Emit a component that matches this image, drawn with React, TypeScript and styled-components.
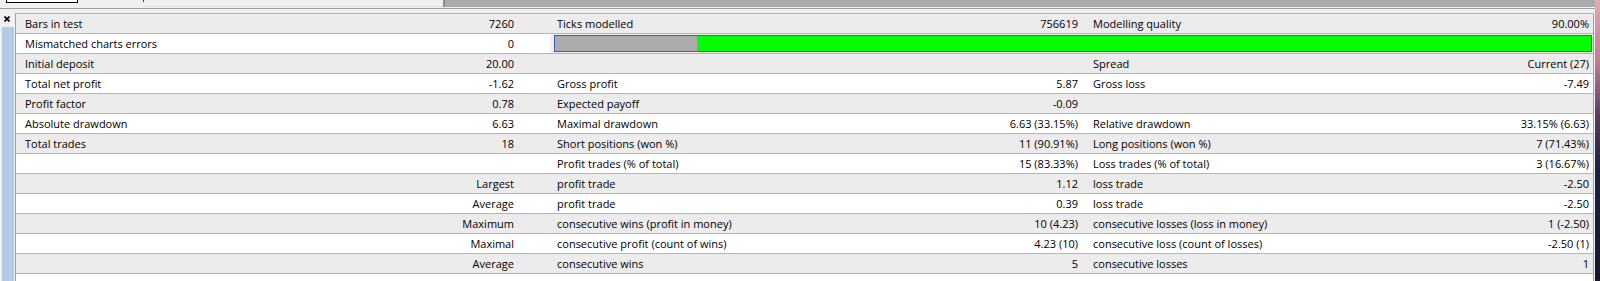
import React from 'react';
import styled, { createGlobalStyle } from 'styled-components';

const GlobalStyle = createGlobalStyle`
  html, body { margin: 0; padding: 0; background: #f0f0f0; }
  body {
    font-family: "Open Sans", "Noto Sans", sans-serif;
    font-size: 11px;
    color: #000;
  }
`;

const Screen = styled.div`
  display: flex;
  width: 1600px;
  height: 281px;
  overflow: hidden;
`;

const Window = styled.div`
  width: 1595px;
  display: flex;
  flex-direction: column;
  background: #f0f0f0;
`;

const Desktop = styled.div`
  flex: 1;
  background: linear-gradient(180deg, #e0aab8 0%, #c27a92 22%, #5a3a60 42%, #1c2040 60%, #141a30 100%);
`;

const TopStrip = styled.div`
  height: 7px;
  display: flex;
  align-items: flex-start;
  flex-shrink: 0;
`;

const TabStub = styled.div`
  margin-left: 6px;
  width: 70px;
  height: 2px;
  background: #ffffff;
  border: 1px solid #000;
  border-top: none;
`;

const TinyMark = styled.div`
  margin-left: 65px;
  width: 1px;
  height: 2px;
  background: #444;
`;

const TitleArea = styled.div`
  width: 299px;
  height: 6px;
  border-bottom: 1px solid #e2e2e2;
`;

const GrayBar = styled.div`
  flex: 1;
  height: 7px;
  background: #ababab;
  border-left: 2px solid #8e8e8e;
`;

const Separator = styled.div`
  margin-top: 1px;
  height: 4px;
  border-top: 1px solid #a0a0a0;
  flex-shrink: 0;
`;

const Body = styled.div`
  flex: 1;
  display: flex;
  min-height: 0;
`;

const SideBar = styled.div`
  width: 15px;
  display: flex;
  flex-direction: column;
`;

const CloseBox = styled.div`
  height: 14px;
  padding: 3px 0 0 4px;
  box-sizing: border-box;
  display: flex;
  align-items: flex-start;
`;

const BlueStrip = styled.div`
  margin-left: 2px;
  width: 12px;
  flex: 1;
  background: #b3cbe5;
`;

const Table = styled.div`
  flex: 1;
  margin-right: 1px;
  display: flex;
  flex-direction: column;
  border-left: 1px solid #a0a0a0;
  border-right: 1px solid #a0a0a0;
  border-top: 1px solid #b5b5b5;
  background: #ffffff;
`;

const Row = styled.div<{ $alt: boolean }>`
  display: grid;
  grid-template-columns: 270px 264px 280px 256px 254px 253px;
  height: 19px;
  flex-shrink: 0;
  border-bottom: 1px solid #b5b5b5;
  background: ${(p) => (p.$alt ? '#ececec' : '#ffffff')};
`;

const Cell = styled.div<{ $align: 'left' | 'right'; $pad: number }>`
  line-height: 19px;
  white-space: nowrap;
  overflow: hidden;
  text-align: ${(p) => p.$align};
  ${(p) => (p.$align === 'left' ? `padding-left: ${p.$pad}px;` : `padding-right: ${p.$pad}px;`)}
`;

const BarCell = styled.div`
  grid-column: 3 / 7;
  padding: 1px 1px 1px 4px;
  background: #f0f0f0;
`;

const QualityBar = styled.div`
  height: 17px;
  box-sizing: border-box;
  border: 1px solid #2f62c6;
  display: flex;
`;

const BarGray = styled.div`
  width: 142px;
  background: #acacac;
`;

const BarGreen = styled.div`
  flex: 1;
  background: #00ff00;
`;

const cols: { align: 'left' | 'right'; pad: number }[] = [
  { align: 'left', pad: 9 },
  { align: 'right', pad: 36 },
  { align: 'left', pad: 7 },
  { align: 'right', pad: 8 },
  { align: 'left', pad: 7 },
  { align: 'right', pad: 4 },
];

const rows: (string[] | 'bar')[] = [
  ['Bars in test', '7260', 'Ticks modelled', '756619', 'Modelling quality', '90.00%'],
  'bar',
  ['Initial deposit', '20.00', '', '', 'Spread', 'Current (27)'],
  ['Total net profit', '-1.62', 'Gross profit', '5.87', 'Gross loss', '-7.49'],
  ['Profit factor', '0.78', 'Expected payoff', '-0.09', '', ''],
  ['Absolute drawdown', '6.63', 'Maximal drawdown', '6.63 (33.15%)', 'Relative drawdown', '33.15% (6.63)'],
  ['Total trades', '18', 'Short positions (won %)', '11 (90.91%)', 'Long positions (won %)', '7 (71.43%)'],
  ['', '', 'Profit trades (% of total)', '15 (83.33%)', 'Loss trades (% of total)', '3 (16.67%)'],
  ['', 'Largest', 'profit trade', '1.12', 'loss trade', '-2.50'],
  ['', 'Average', 'profit trade', '0.39', 'loss trade', '-2.50'],
  ['', 'Maximum', 'consecutive wins (profit in money)', '10 (4.23)', 'consecutive losses (loss in money)', '1 (-2.50)'],
  ['', 'Maximal', 'consecutive profit (count of wins)', '4.23 (10)', 'consecutive loss (count of losses)', '-2.50 (1)'],
  ['', 'Average', 'consecutive wins', '5', 'consecutive losses', '1'],
  ['', '', '', '', '', ''],
];

const CloseIcon = () => (
  <svg width="6" height="6" viewBox="0 0 6 6">
    <path d="M0.5 0.5 L5.5 5.5 M5.5 0.5 L0.5 5.5" stroke="#000" strokeWidth="1.6" />
  </svg>
);

export default function App() {
  return (
    <>
      <GlobalStyle />
      <Screen>
        <Window>
          <TopStrip>
            <TabStub />
            <TinyMark />
            <TitleArea />
            <GrayBar />
          </TopStrip>
          <Separator />
          <Body>
            <SideBar>
              <CloseBox>
                <CloseIcon />
              </CloseBox>
              <BlueStrip />
            </SideBar>
            <Table>
              {rows.map((r, i) =>
                r === 'bar' ? (
                  <Row key={i} $alt={i % 2 === 0}>
                    <Cell $align="left" $pad={9}>Mismatched charts errors</Cell>
                    <Cell $align="right" $pad={36}>0</Cell>
                    <BarCell>
                      <QualityBar>
                        <BarGray />
                        <BarGreen />
                      </QualityBar>
                    </BarCell>
                  </Row>
                ) : (
                  <Row key={i} $alt={i % 2 === 0}>
                    {r.map((t, j) => (
                      <Cell key={j} $align={cols[j].align} $pad={cols[j].pad}>
                        {t}
                      </Cell>
                    ))}
                  </Row>
                )
              )}
            </Table>
          </Body>
        </Window>
        <Desktop />
      </Screen>
    </>
  );
}
